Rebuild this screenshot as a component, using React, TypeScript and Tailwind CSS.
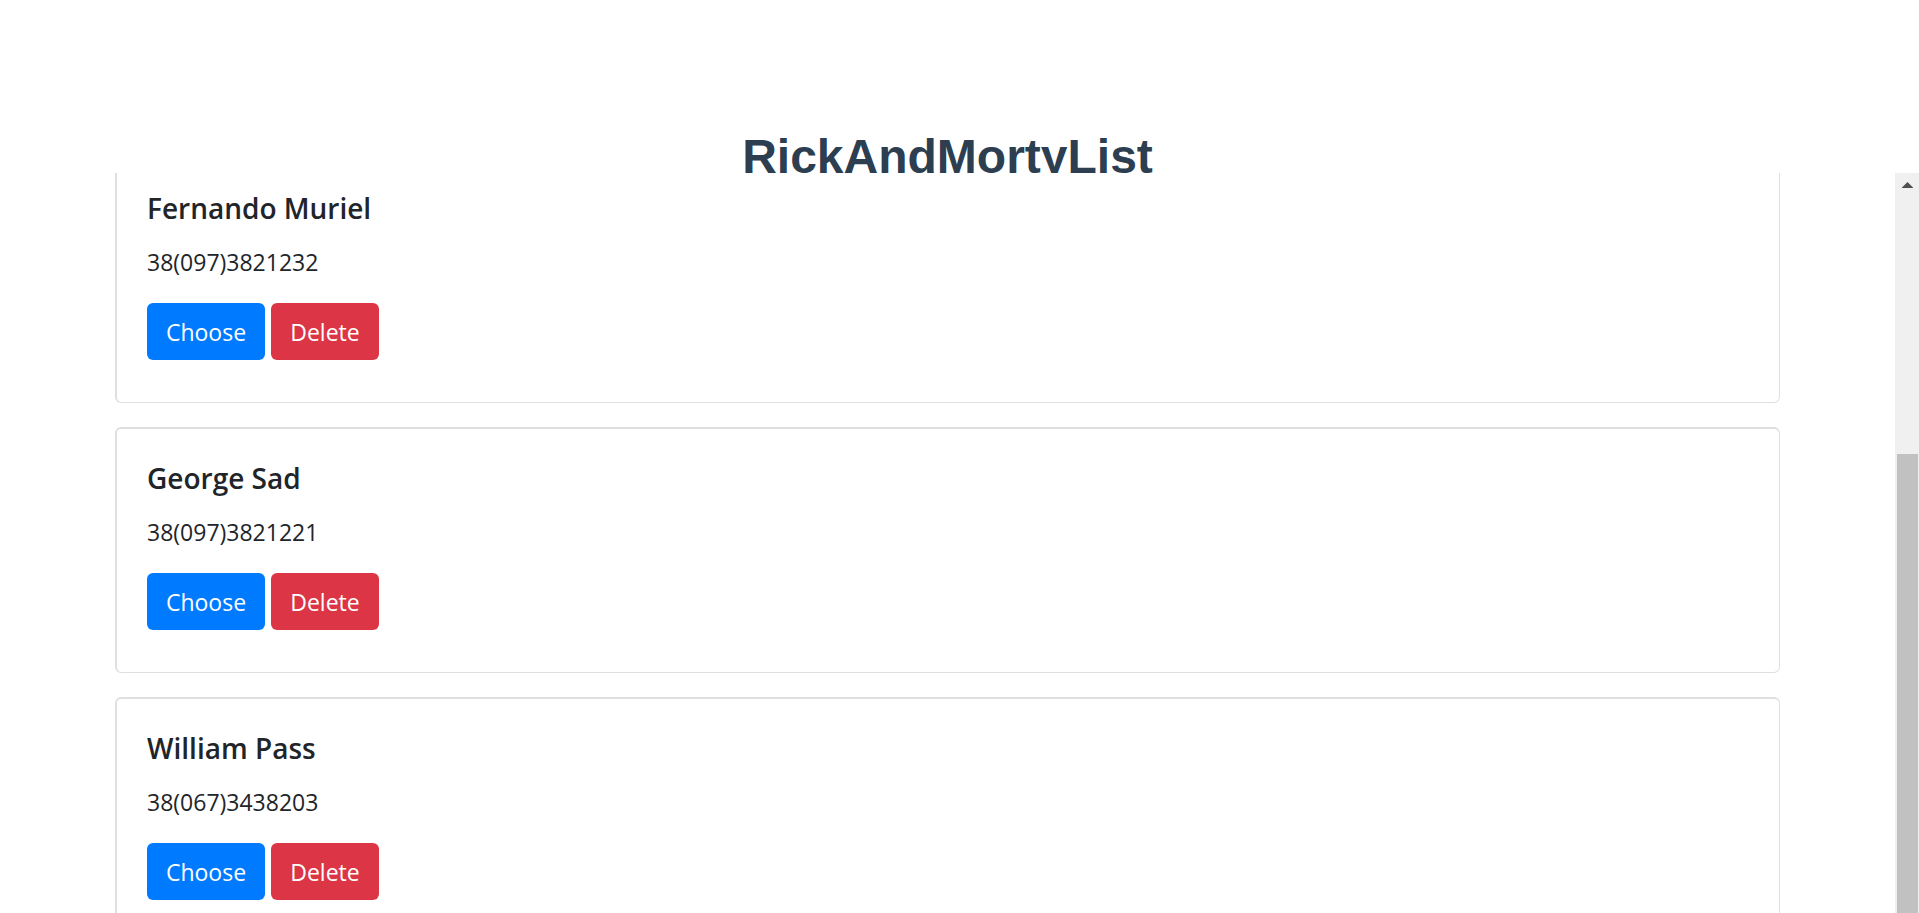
type Contact = { name: string; phone: string };

const contacts: Contact[] = [
  { name: "Fernando Muriel", phone: "38(097)3821232" },
  { name: "George Sad", phone: "38(097)3821221" },
  { name: "William Pass", phone: "38(067)3438203" },
];

function ContactCard({ name, phone }: Contact) {
  return (
    <li className="rounded-md border border-t-2 border-l-2 border-[#dfdfdf] bg-white px-[30px] pt-[31px] pb-[42px]">
      <h2 className="mb-[18px] text-[28px] leading-9 font-semibold">{name}</h2>
      <p className="mb-[23px] text-[23px] leading-9">{phone}</p>
      <div className="flex gap-1.5">
        <button
          type="button"
          className="h-[57px] min-w-[118px] rounded-md bg-[#007bff] px-[18px] text-[23px] leading-9 text-white"
        >
          Choose
        </button>
        <button
          type="button"
          className="h-[57px] min-w-[108px] rounded-md bg-[#dc3545] px-[18px] text-[23px] leading-9 text-white"
        >
          Delete
        </button>
      </div>
    </li>
  );
}

function Scrollbar() {
  return (
    <div className="flex w-6 shrink-0 flex-col bg-[#f0f0f0] pr-px pl-0.5">
      <button type="button" aria-label="Scroll up" className="flex h-6 items-center justify-center">
        <svg width="11" height="6" viewBox="0 0 11 6" fill="#505050" aria-hidden="true">
          <path d="M5.5 0 11 5.5V6H0V5.5Z" />
        </svg>
      </button>
      <div className="mt-[257px] flex-1 bg-[#c1c1c1]" />
    </div>
  );
}

export default function App() {
  return (
    <div className="flex h-screen flex-col overflow-hidden bg-white text-[#212529] [font-family:'Open_Sans','Noto_Sans',sans-serif]">
      <header className="h-[173px] shrink-0 overflow-hidden pt-[129px] pr-6 text-center">
        <h1 className="text-5xl leading-[56px] font-bold text-[#2c3e50] [font-family:'Liberation_Sans',Arial,sans-serif]">
          RickAndMortyList
        </h1>
      </header>
      <div className="flex min-h-0 flex-1">
        <main className="min-w-0 flex-1 overflow-hidden px-[115px]">
          <ul className="-mt-4 flex flex-col gap-6">
            {contacts.map((contact) => (
              <ContactCard key={contact.name} {...contact} />
            ))}
          </ul>
        </main>
        <Scrollbar />
      </div>
    </div>
  );
}
